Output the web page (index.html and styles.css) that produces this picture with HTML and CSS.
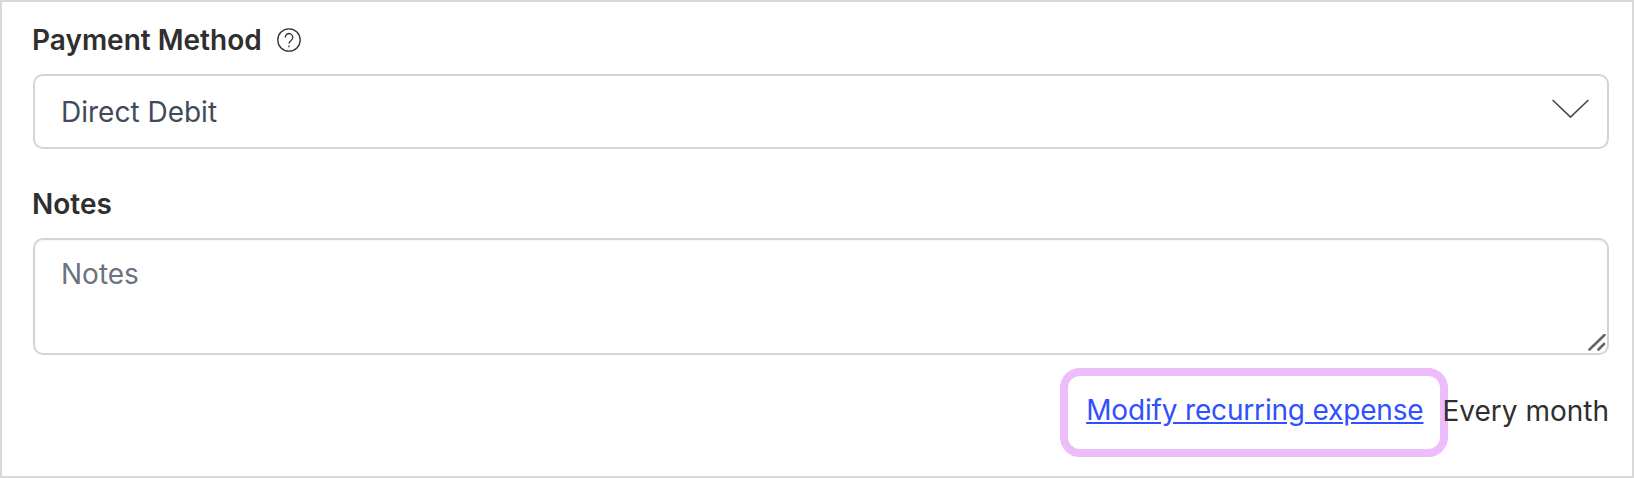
FILE: index.html
```html
<!DOCTYPE html>
<html lang="en">
<head>
    <meta charset="UTF-8">
    <title>Payment Method</title>
    <link rel="stylesheet" href="styles.css">
</head>
<body>
    <div class="panel">
        <div class="label-row">
            <span class="label">Payment Method</span>
            <svg class="help" width="24" height="24" viewBox="0 0 24 24" fill="none" stroke="#2f3136" stroke-width="1.3">
                <circle cx="12" cy="12" r="11.2"/>
                <path d="M8.2 9.4a3.8 3.8 0 1 1 5.9 3.1c-1.4.9-2.1 1.6-2.1 3.1"/>
                <path d="M12 17.6v1.6"/>
            </svg>
        </div>
        <div class="select">
            <span>Direct Debit</span>
            <svg class="chevron" width="37" height="20" viewBox="0 0 37 20" fill="none" stroke="#414a58" stroke-width="1.6">
                <path d="M0.6 1L18.5 18.2L36.4 1"/>
            </svg>
        </div>
        <div class="label notes-label">Notes</div>
        <div class="textarea">
            <span class="placeholder">Notes</span>
            <svg class="grip" width="18" height="17" viewBox="0 0 18 17" fill="none" stroke="#666" stroke-width="2.6" stroke-linecap="round">
                <path d="M1.5 15.5L16.5 1"/>
                <path d="M10.5 15.5L16 10"/>
            </svg>
        </div>
        <div class="footer-row">
            <div class="highlight">
                <a href="#">Modify recurring expense</a>
            </div>
            <span class="schedule">Every month</span>
        </div>
    </div>
</body>
</html>
```
FILE: styles.css
```css
html, body {
    margin: 0;
    padding: 0;
    background: #fff;
}
body {
    font-family: Inter, sans-serif;
    color: #2f2f2f;
}
.panel {
    box-sizing: border-box;
    width: 1634px;
    height: 478px;
    border: 2px solid #d9d9d9;
    padding: 19px 23px 0 31px;
}
.label-row {
    display: flex;
    align-items: center;
    gap: 15px;
    height: 38px;
}
.label {
    margin-left: -1px;
    font-size: 28px;
    font-weight: 600;
    line-height: 38px;
}
.select {
    box-sizing: border-box;
    height: 75px;
    margin-top: 15px;
    border: 2px solid #d1d5db;
    border-radius: 10px;
    padding: 0 18px 0 26px;
    display: flex;
    align-items: center;
    justify-content: space-between;
    font-size: 28px;
    color: #414a58;
}
.chevron {
    margin-top: -6px;
}
.notes-label {
    margin-top: 36px;
}
.textarea {
    box-sizing: border-box;
    position: relative;
    height: 117px;
    margin-top: 15px;
    border: 2px solid #d1d5db;
    border-radius: 10px;
    padding: 18px 26px;
    font-size: 28px;
    line-height: 32px;
    box-shadow: inset 0 1px 2px rgba(0,0,0,0.05);
}
.placeholder {
    color: #6b7280;
}
.grip {
    position: absolute;
    right: 1px;
    bottom: 2px;
}
.footer-row {
    display: flex;
    justify-content: flex-end;
    align-items: center;
    margin-top: 13px;
    font-size: 28px;
}
.highlight {
    box-sizing: border-box;
    height: 89px;
    margin-right: -6px;
    border: 8px solid #ecbcfb;
    border-radius: 20px;
    padding: 0 17px 5px 18px;
    display: flex;
    align-items: center;
}
.highlight a {
    color: #3050ff;
    letter-spacing: -0.17px;
}
.schedule {
    position: relative;
    padding-bottom: 4px;
}
```
